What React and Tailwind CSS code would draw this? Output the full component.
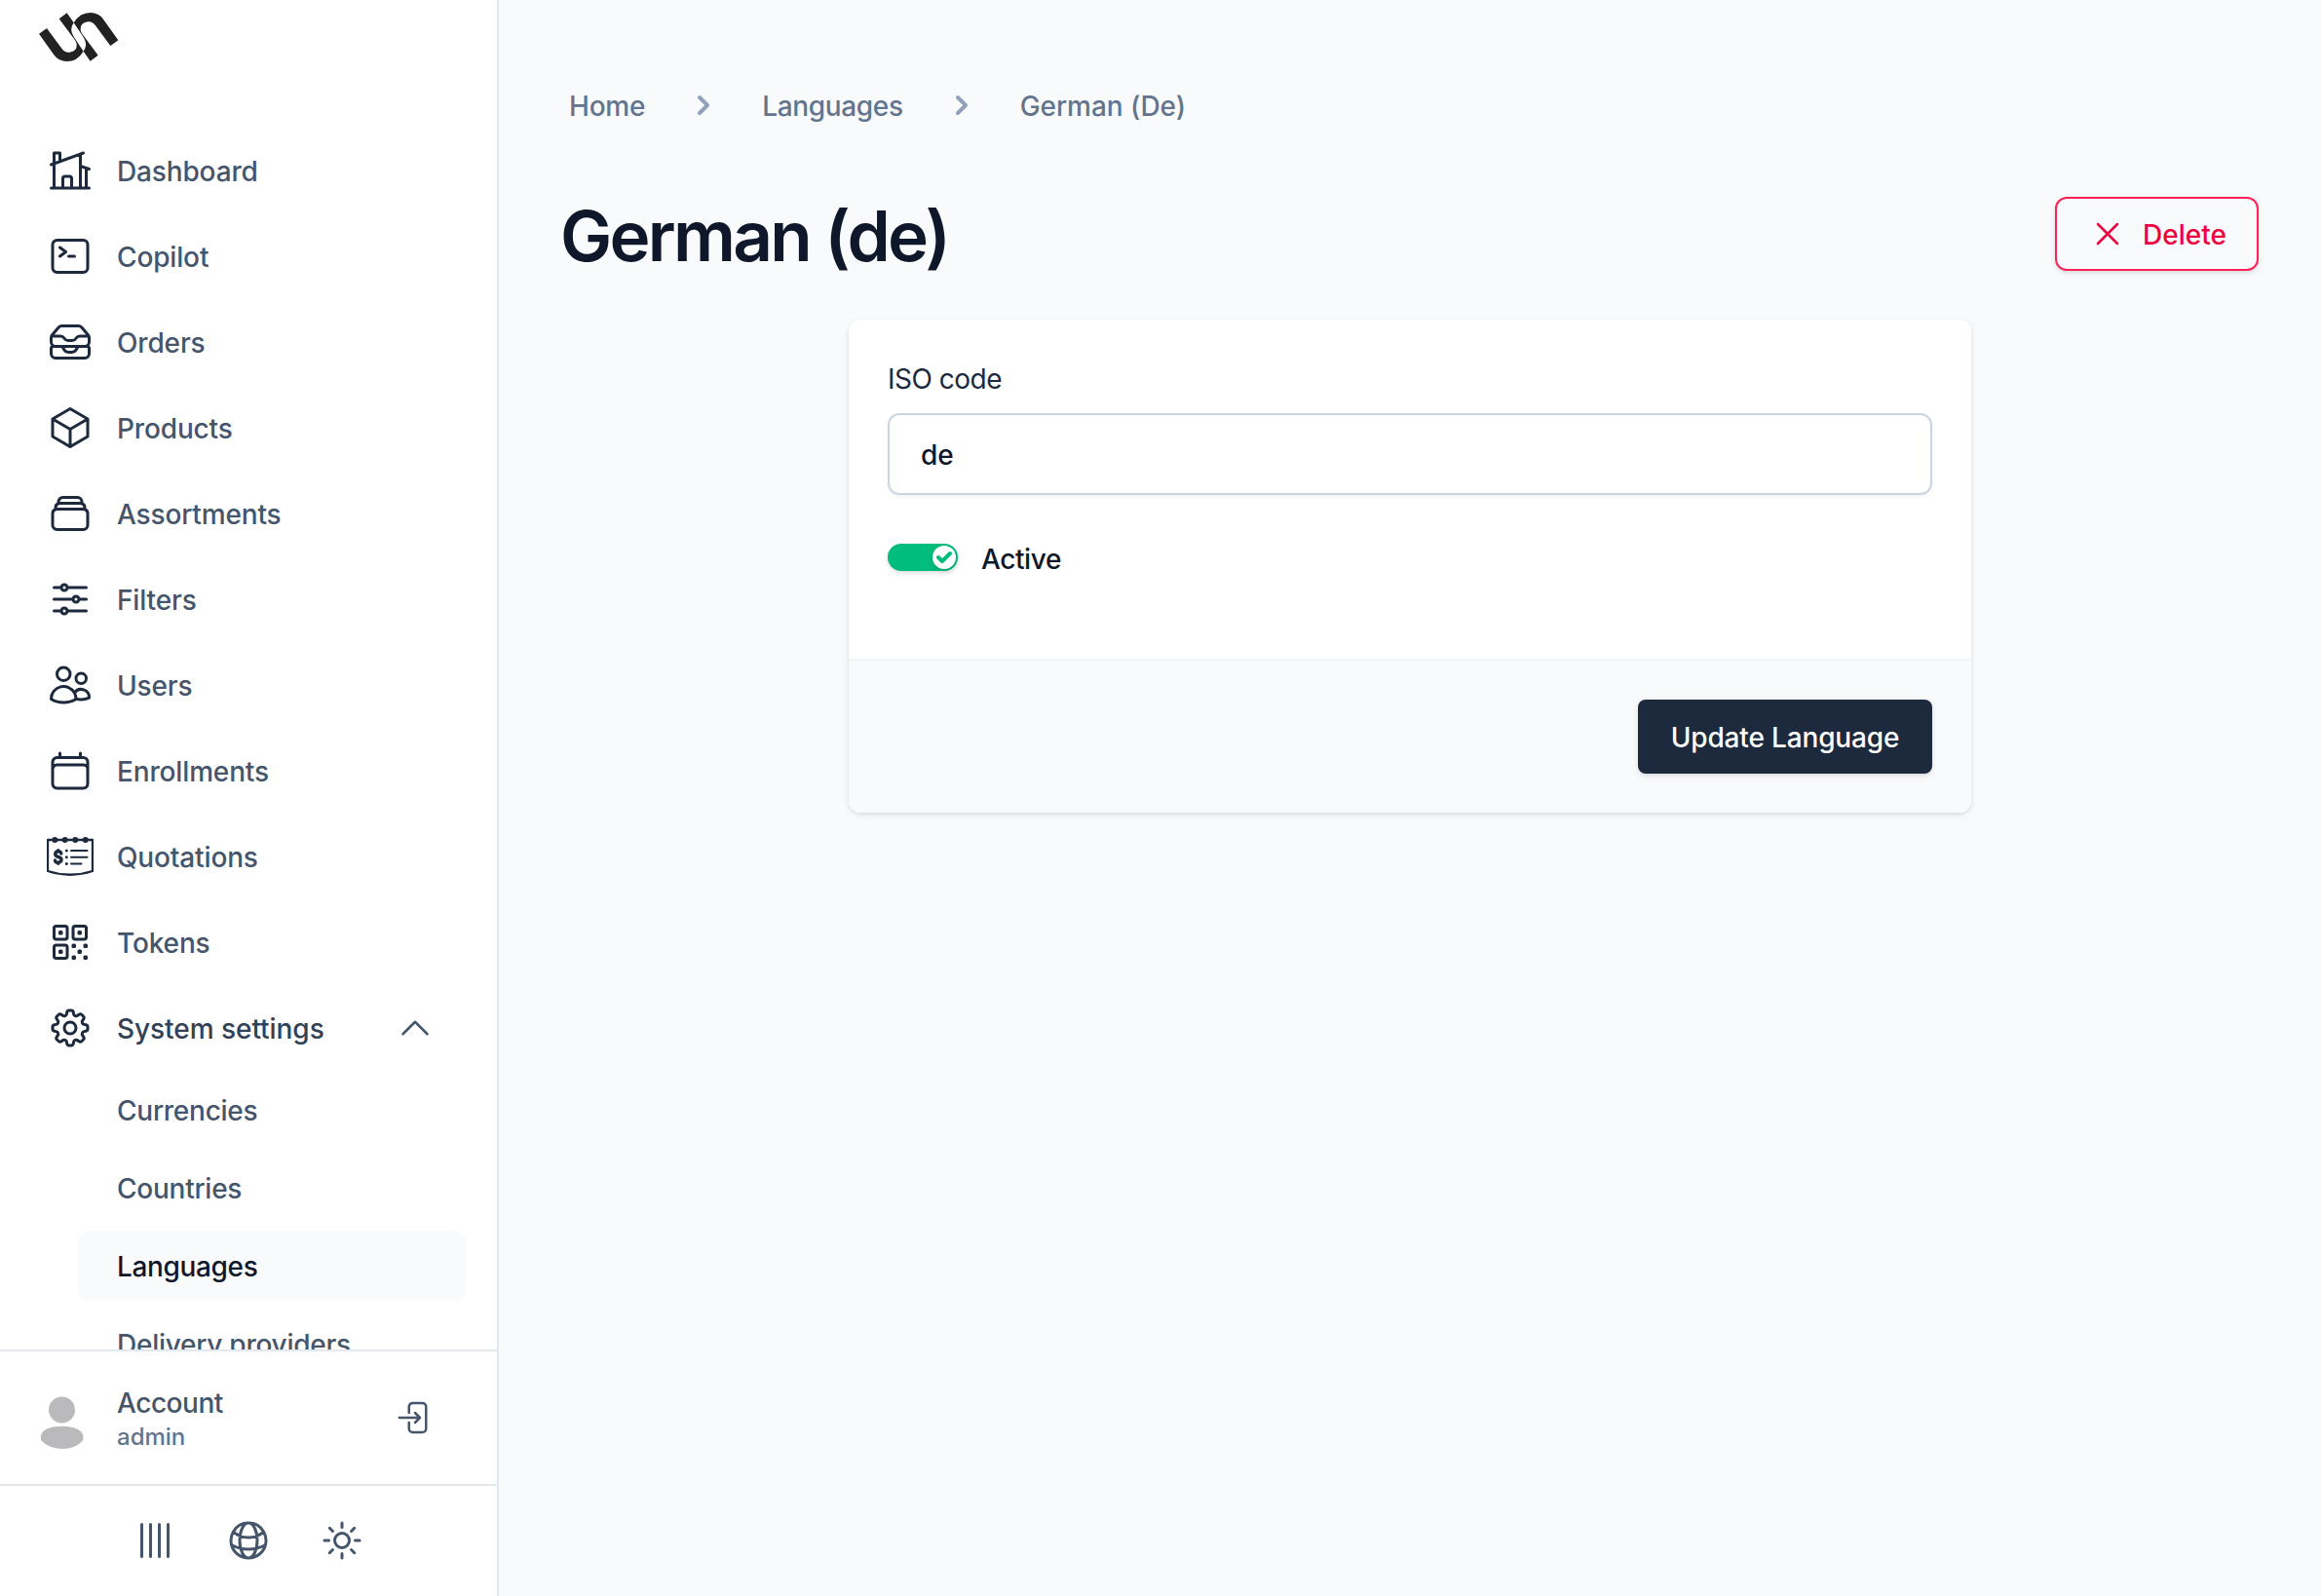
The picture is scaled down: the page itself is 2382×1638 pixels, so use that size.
import { HiOutlineHomeModern, HiOutlineCommandLine, HiOutlineInboxStack, HiOutlineCube, HiOutlineRectangleStack, HiOutlineAdjustmentsHorizontal, HiOutlineUsers, HiOutlineCalendar, HiOutlineQrCode, HiOutlineChevronUp, HiOutlineGlobeAlt, HiOutlineSun, HiOutlineXMark, HiOutlineArrowRightEndOnRectangle, HiOutlineCog8Tooth } from "react-icons/hi2";
import { HiChevronRight } from "react-icons/hi";

const strand =
  "M0 65 L24 48 L70 110 Q80 124 94 122 Q118 118 116 98 Q116 90 106 78 L62 19 L86 1 L107 31 Q92 52 108 76 L137 119 Q118 150 86 150 Q60 150 46 130 Z";

function Logo() {
  return (
    <svg viewBox="0 0 246 150" className="h-[50px] w-[82px]" fill="#222">
      <path d={strand} />
      <path d={strand} transform="rotate(180 122 75)" />
    </svg>
  );
}

function Quotation({ className }) {
  return (
    <svg viewBox="0 0 48 48" className={className} fill="none" stroke="currentColor" strokeWidth="2" strokeLinecap="round" strokeLinejoin="round">
      <path strokeWidth="2.300" d="M1 7h46v32q-23 7.500-46 0z" />
      <g fill="currentColor" stroke="none">
        <circle cx="8.300" cy="7" r="3" />
        <circle cx="18.700" cy="7" r="3" />
        <circle cx="29.300" cy="7" r="3" />
        <circle cx="39.700" cy="7" r="3" />
        <circle cx="20.300" cy="18" r="1.500" />
        <circle cx="20.300" cy="24.700" r="1.500" />
        <circle cx="20.300" cy="31.500" r="1.500" />
      </g>
      <path d="M25 18h16.500M25 24.700h16.500M25 31.500h10.500" />
      <path strokeWidth="3.400" d="M14.800 21q-.3-2.200-3-2.200t-3 2.500 3 3.200 3.200 3-3.200 2.700-3.300-2.200M11.800 17.800v.8M11.800 30.400v.8" />
    </svg>
  );
}

const items = [
  ["Dashboard", HiOutlineHomeModern],
  ["Copilot", HiOutlineCommandLine],
  ["Orders", HiOutlineInboxStack],
  ["Products", HiOutlineCube],
  ["Assortments", HiOutlineRectangleStack],
  ["Filters", HiOutlineAdjustmentsHorizontal],
  ["Users", HiOutlineUsers],
  ["Enrollments", HiOutlineCalendar],
  ["Quotations", Quotation],
  ["Tokens", HiOutlineQrCode],
];

const settings = ["Currencies", "Countries", "Languages", "Delivery providers"];

export default function App() {
  return (
    <div className="flex h-[1638px] w-[2382px] overflow-hidden bg-slate-50 font-['Inter',sans-serif] text-[28px] leading-[40px] font-medium tracking-[-0.15px] text-slate-600">
      <aside className="flex w-[512px] shrink-0 flex-col border-r-2 border-slate-200 bg-white">
        <div className="h-[135px] shrink-0 pt-[13px] pl-10"><Logo /></div>
        <nav className="flex min-h-0 flex-1 flex-col gap-2 overflow-hidden px-8">
          {items.map(([name, Icon]) => (
            <a key={name} className="flex h-20 shrink-0 items-center gap-6 px-4">
              <Icon className="size-12 text-slate-800" />
              <span className="pt-0.5">{name}</span>
            </a>
          ))}
          <a className="flex h-20 shrink-0 items-center gap-6 pr-8 pl-4 text-slate-700">
            <HiOutlineCog8Tooth className="size-12 text-slate-800" />
            <span className="flex-1 pt-0.5 tracking-[-0.05px]">System settings</span>
            <HiOutlineChevronUp className="size-10 text-slate-600" />
          </a>
          {settings.map((name) => (
            <a key={name} className={name === "Languages" ? "ml-12 flex h-[72px] shrink-0 items-center rounded-xl bg-slate-50 pt-0.5 pl-10 tracking-[-0.35px] text-slate-900" : "ml-12 flex h-[72px] shrink-0 items-center pt-0.5 pl-10 tracking-[-0.25px]"}>{name}</a>
          ))}
        </nav>
        <div className="flex h-[138px] shrink-0 items-center border-t-2 border-slate-200 pr-16 pl-10">
          <svg viewBox="0 0 48 56" className="mt-2 h-14 w-12" fill="#bababc">
            <circle cx="23.5" cy="16" r="13.5" />
            <path d="M2 43C2 37 10 32.700 24 32.700S45.300 38 45.300 43v4C40 53 33 56 24 56S6 52 2 47z" />
          </svg>
          <div className="ml-8 flex-1 pt-[3px]">
            <div className="leading-[36px] tracking-[-0.45px]">Account</div>
            <div className="mt-px text-2xl tracking-normal text-slate-500">admin</div>
          </div>
          <HiOutlineArrowRightEndOnRectangle className="size-10" />
        </div>
        <div className="flex h-[115px] shrink-0 items-center justify-center gap-12 border-t-2 border-slate-200 pb-px">
          <svg viewBox="0 0 48 48" className="size-12" stroke="currentColor" strokeWidth="3" strokeLinecap="round">
            <path d="M10.5 7.5v33M19.5 7.5v33M28.5 7.5v33M37.5 7.5v33" />
          </svg>
          <HiOutlineGlobeAlt className="size-12" />
          <HiOutlineSun className="size-12" />
        </div>
      </aside>
      <main className="flex min-w-0 flex-1 flex-col px-16 pt-[88px]">
        <div className="flex h-10 items-center gap-10 pl-2 text-slate-500">
          <span className="pt-0.5 tracking-[-0.2px]">Home</span>
          <HiChevronRight className="size-10 text-slate-400" />
          <span className="pt-0.5 tracking-[-0.35px]">Languages</span>
          <HiChevronRight className="size-10 text-slate-400" />
          <span className="pt-0.5 tracking-[-0.05px]">German (De)</span>
        </div>
        <div className="mt-[74px] flex h-[76px] items-center justify-between">
          <h1 className="-ml-px pt-1 text-[71px] leading-[80px] font-semibold tracking-[-2.7px] text-slate-900">German (de)</h1>
          <button className="flex h-[76px] w-[209px] items-center rounded-xl border-2 border-rose-500 pl-8 tracking-normal text-rose-600 shadow-[0_2px_6px_rgb(0_0_0/0.1),0_2px_4px_-2px_rgb(0_0_0/0.1)]">
            <HiOutlineXMark className="size-10" />
            <span className="ml-4 pt-0.5">Delete</span>
          </button>
        </div>
        <section className="mx-auto mt-[50px] w-[1152px] overflow-hidden rounded-xl bg-white shadow-[0_2px_6px_rgb(0_0_0/0.1),0_2px_4px_-2px_rgb(0_0_0/0.1)]">
          <div className="h-[348px] px-10 pt-[41px]">
            <label className="block font-normal tracking-[-0.5px] text-slate-800">ISO code</label>
            <div className="mt-[15px] flex h-[84px] items-center rounded-xl border-2 border-slate-300 px-8 pt-0.5 text-slate-900 shadow-[0_2px_4px_rgb(0_0_0/0.05)]">de</div>
            <div className="mt-[44px] flex h-10 items-center gap-6 text-slate-900">
              <span className="flex h-7 w-[72px] items-center justify-end rounded-full bg-emerald-500 pr-[2px] shadow-[0_2px_6px_rgb(0_0_0/0.1),0_2px_4px_-2px_rgb(0_0_0/0.1)]">
                <span className="flex size-6 items-center justify-center rounded-full bg-white shadow-[0_2px_6px_rgb(0_0_0/0.1),0_2px_4px_-2px_rgb(0_0_0/0.1)]">
                  <svg viewBox="0 0 12 12" className="size-6 text-emerald-500" fill="currentColor"><path d="M3.707 5.293a1 1 0 00-1.414 1.414l1.414-1.414zM5 8l-.707.707a1 1 0 001.414 0L5 8zm4.707-3.293a1 1 0 00-1.414-1.414l1.414 1.414zm-7.414 2l2 2 1.414-1.414-2-2-1.414 1.414zm3.414 2l4-4-1.414-1.414-4 4 1.414 1.414z" /></svg>
                </span>
              </span>
              <span className="pt-[3px] tracking-[-0.4px]">Active</span>
            </div>
          </div>
          <div className="flex justify-end border-t-2 border-slate-100 bg-slate-50 p-10">
            <button className="h-[76px] w-[302px] rounded-lg bg-slate-800 pt-0.5 text-white shadow-[0_2px_6px_rgb(0_0_0/0.1),0_2px_4px_-2px_rgb(0_0_0/0.1)]">Update Language</button>
          </div>
        </section>
      </main>
    </div>
  );
}
